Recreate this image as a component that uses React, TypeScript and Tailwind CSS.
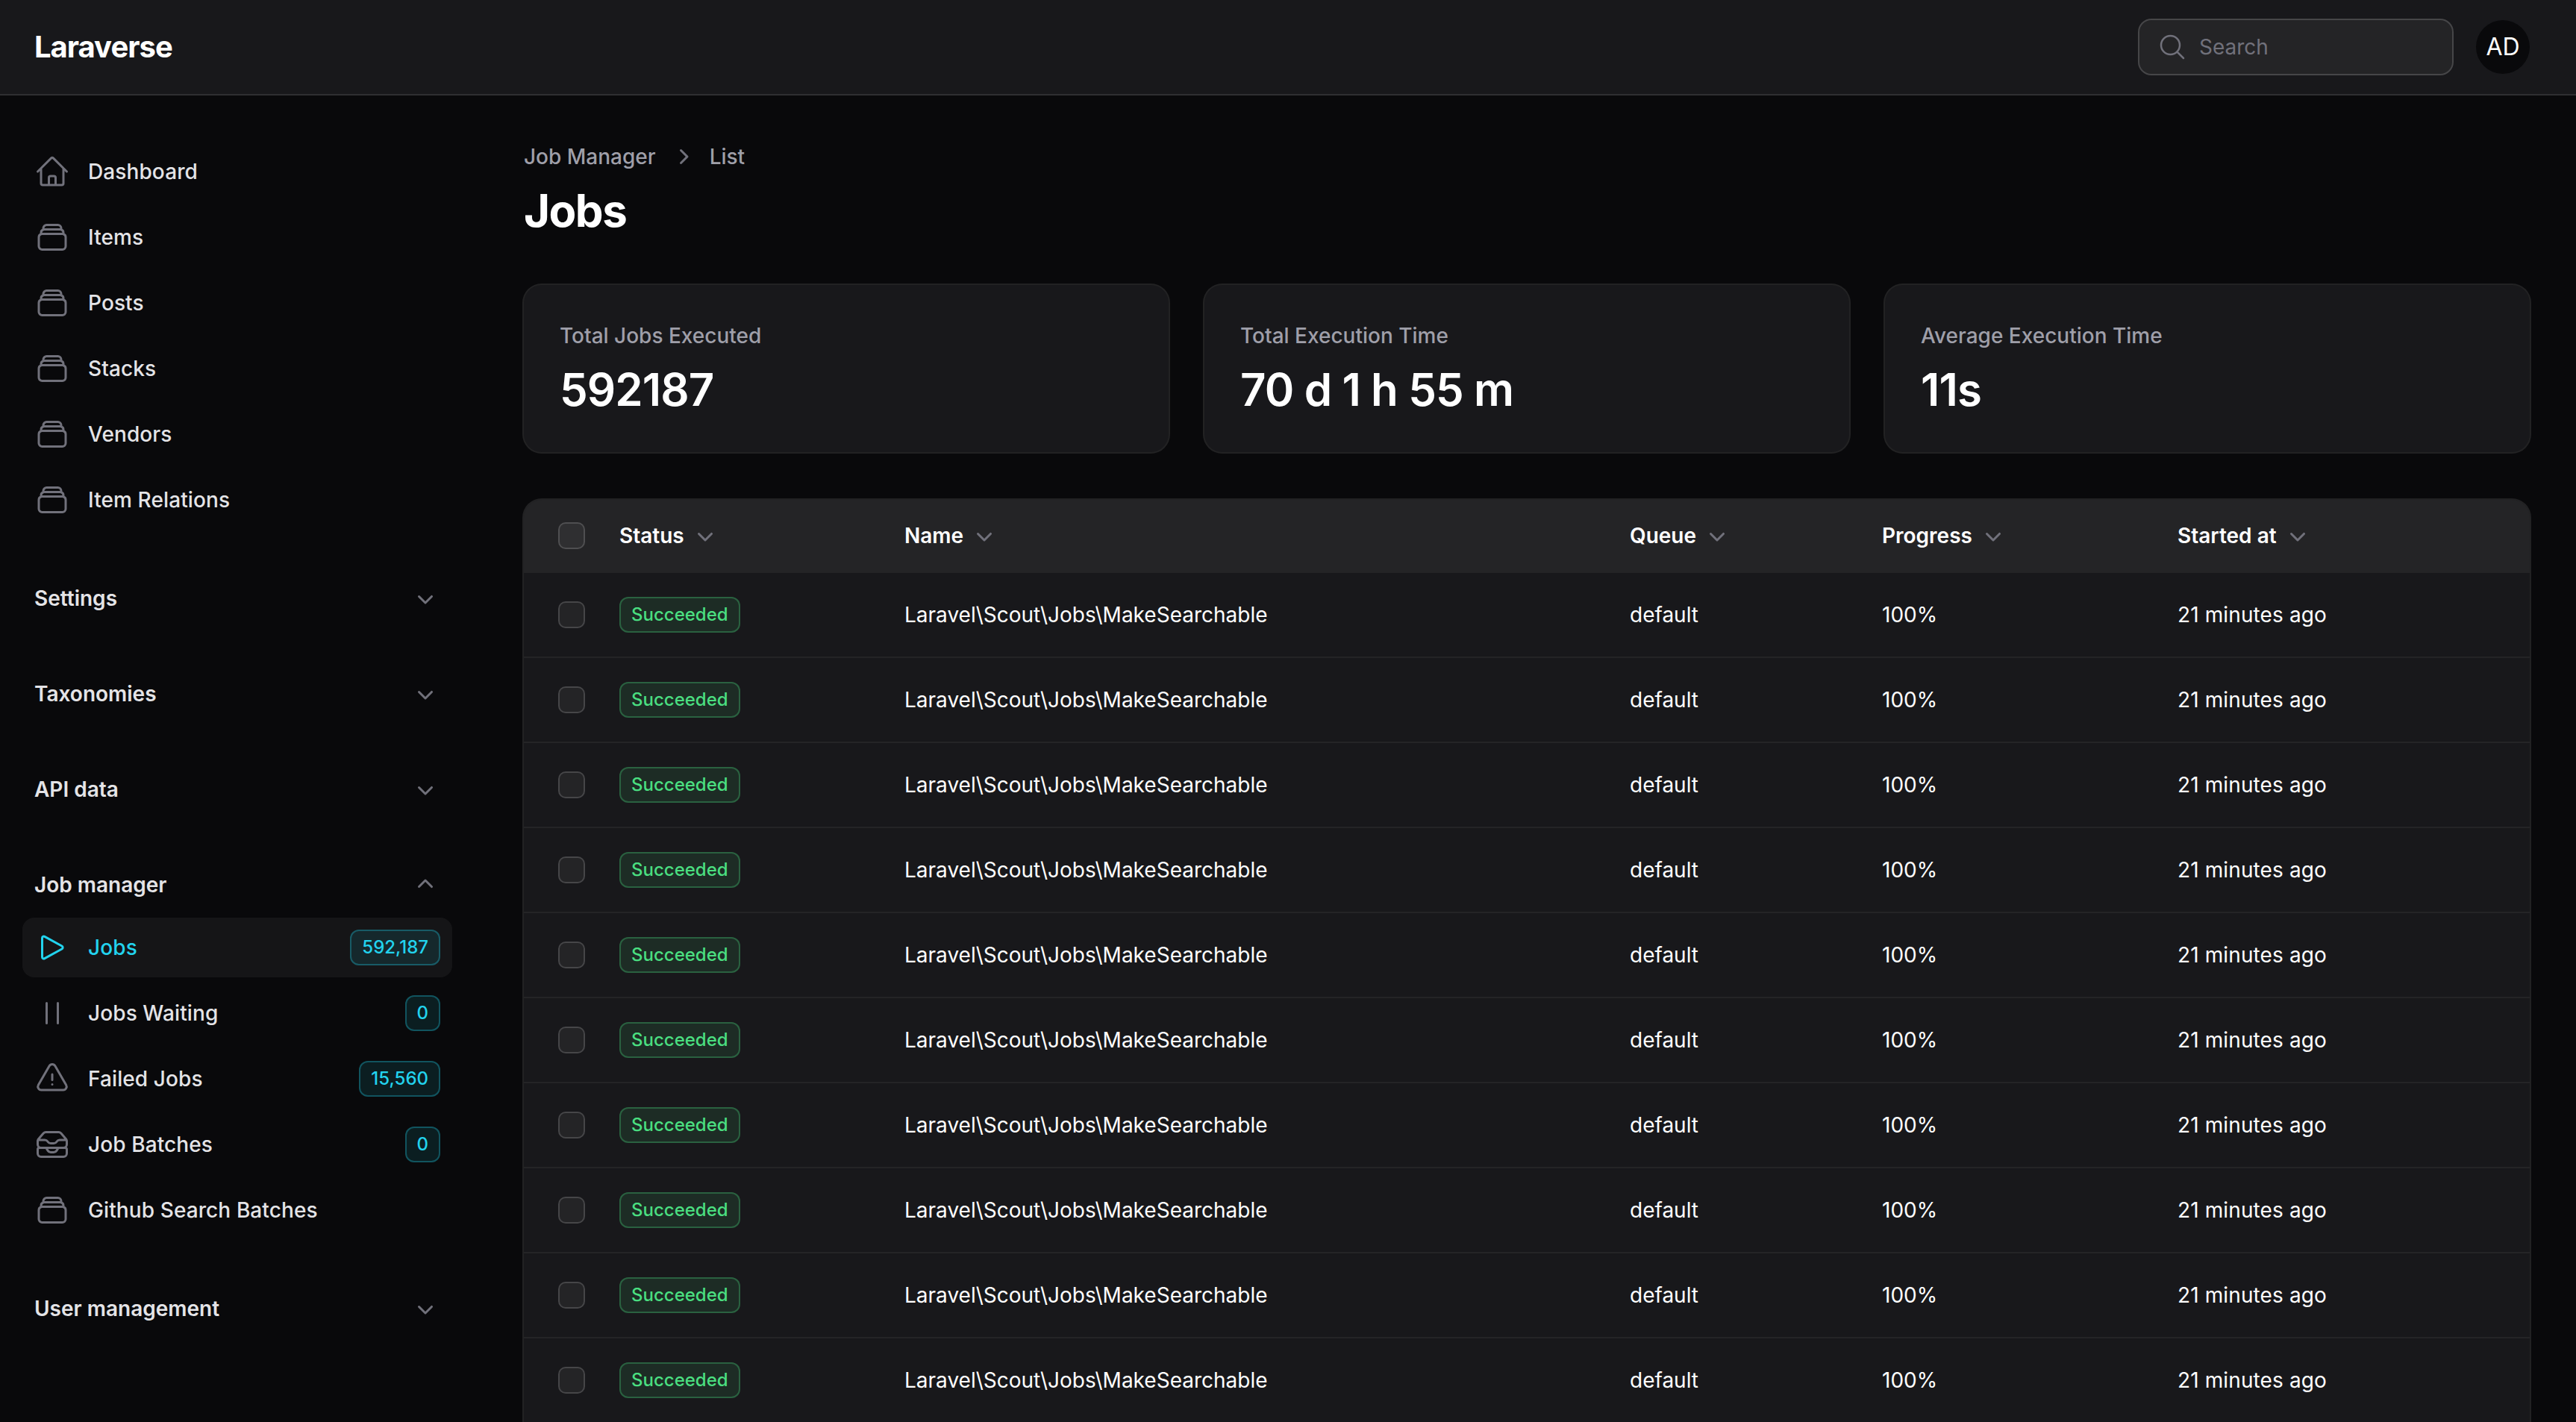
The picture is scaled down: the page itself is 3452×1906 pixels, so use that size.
import type { ReactNode } from "react";
import {
  HiOutlineHome,
  HiOutlineRectangleStack,
  HiOutlinePlay,
  HiOutlinePause,
  HiOutlineExclamationTriangle,
  HiOutlineInboxStack,
  HiOutlineMagnifyingGlass,
  HiMiniChevronDown,
  HiMiniChevronUp,
  HiMiniChevronRight,
} from "react-icons/hi2";

interface NavItemProps {
  icon: ReactNode;
  label: string;
  badge?: string;
  active?: boolean;
}

function NavItem({ icon, label, badge, active }: NavItemProps) {
  return (
    <li
      className={
        active
          ? "flex h-10 items-center gap-x-3 rounded-lg bg-white/5 px-2"
          : "flex h-10 items-center gap-x-3 rounded-lg px-2"
      }
    >
      {icon}
      <span
        className={
          active
            ? "flex-1 truncate text-sm font-medium tracking-[0.05px] text-[#22d3ee]"
            : "flex-1 truncate text-sm font-medium tracking-[0.05px] text-zinc-200"
        }
      >
        {label}
      </span>
      {badge && (
        <span className="rounded-md bg-[#22d3ee]/10 px-2 py-1 text-xs font-medium text-[#22d3ee] ring-1 ring-inset ring-[#22d3ee]/30">
          {badge}
        </span>
      )}
    </li>
  );
}

function GroupLabel({ label, open }: { label: string; open?: boolean }) {
  return (
    <div className="flex h-9 items-center gap-x-3 px-2">
      <span className="flex-1 text-sm font-semibold text-zinc-200">{label}</span>
      {open ? (
        <HiMiniChevronUp className="h-5 w-5 text-zinc-500" />
      ) : (
        <HiMiniChevronDown className="h-5 w-5 text-zinc-500" />
      )}
    </div>
  );
}

function StatCard({ label, value }: { label: string; value: string }) {
  return (
    <div className="grid gap-y-2 rounded-xl bg-zinc-900 p-6 ring-1 ring-white/10">
      <span className="text-sm font-medium text-zinc-400">{label}</span>
      <span className="text-3xl font-semibold tracking-[-0.45px] text-white">{value}</span>
    </div>
  );
}

function Checkbox() {
  return <div className="h-4 w-4 rounded bg-white/5 ring-1 ring-white/20" />;
}

function HeaderCell({ label }: { label: string }) {
  return (
    <th className="px-3 py-3.5 text-left">
      <span className="flex items-center gap-x-1 text-sm font-semibold text-white">
        {label}
        <HiMiniChevronDown className="h-5 w-5 text-zinc-500" />
      </span>
    </th>
  );
}

const stackIcon = <HiOutlineRectangleStack className="h-6 w-6 shrink-0 text-zinc-500" />;
const topItems = ["Items", "Posts", "Stacks", "Vendors", "Item Relations"];
const rows = Array.from({ length: 10 }, (_, i) => i);

export default function App() {
  return (
    <div className="flex h-[953px] w-[1726px] flex-col overflow-hidden bg-zinc-950 font-['Inter',sans-serif] [zoom:2]">
      <header className="flex h-16 shrink-0 items-center justify-between border-b border-white/10 bg-zinc-900 pl-[23px] pr-[31px]">
        <span className="text-xl font-bold leading-5 tracking-tight text-white">Laraverse</span>
        <div className="flex items-center gap-x-4">
          <div className="flex h-9 w-[209.5px] items-center gap-x-2 rounded-lg bg-white/5 pl-3 ring-1 ring-white/20">
            <HiOutlineMagnifyingGlass className="h-5 w-5 text-zinc-500" />
            <span className="text-sm text-zinc-500">Search</span>
          </div>
          <div className="flex h-9 w-9 items-center justify-center rounded-full bg-zinc-950 text-base text-white">
            AD
          </div>
        </div>
      </header>

      <div className="flex min-h-0 flex-1">
        <aside className="w-[319px] shrink-0 pl-[15px] pr-4 pt-[31px]">
          <nav className="flex flex-col gap-y-7">
            <ul className="flex flex-col gap-y-1">
              <NavItem icon={<HiOutlineHome className="h-6 w-6 shrink-0 text-zinc-500" />} label="Dashboard" />
              {topItems.map((label) => (
                <NavItem key={label} icon={stackIcon} label={label} />
              ))}
            </ul>
            <GroupLabel label="Settings" />
            <GroupLabel label="Taxonomies" />
            <GroupLabel label="API data" />
            <div className="flex flex-col gap-y-1">
              <GroupLabel label="Job manager" open />
              <ul className="flex flex-col gap-y-1">
                <NavItem
                  active
                  icon={<HiOutlinePlay className="h-6 w-6 shrink-0 text-[#22d3ee]" />}
                  label="Jobs"
                  badge="592,187"
                />
                <NavItem
                  icon={<HiOutlinePause className="h-6 w-6 shrink-0 text-zinc-500" />}
                  label="Jobs Waiting"
                  badge="0"
                />
                <NavItem
                  icon={<HiOutlineExclamationTriangle className="h-6 w-6 shrink-0 text-zinc-500" />}
                  label="Failed Jobs"
                  badge="15,560"
                />
                <NavItem
                  icon={<HiOutlineInboxStack className="h-6 w-6 shrink-0 text-zinc-500" />}
                  label="Job Batches"
                  badge="0"
                />
                <NavItem icon={stackIcon} label="Github Search Batches" />
              </ul>
            </div>
            <GroupLabel label="User management" />
          </nav>
        </aside>

        <main className="min-w-0 flex-1 pl-8 pr-[31px] pt-[31px]">
          <div className="flex items-center gap-x-2 text-sm font-medium text-zinc-400">
            <span>Job Manager</span>
            <HiMiniChevronRight className="h-5 w-5 text-zinc-500" />
            <span>List</span>
          </div>
          <h1 className="mt-2 text-3xl font-bold tracking-tight text-white">Jobs</h1>

          <div className="mt-8 grid grid-cols-3 gap-6">
            <StatCard label="Total Jobs Executed" value="592187" />
            <StatCard label="Total Execution Time" value="70 d 1 h 55 m" />
            <StatCard label="Average Execution Time" value="11s" />
          </div>

          <div className="mt-8 overflow-hidden rounded-t-xl bg-zinc-900 ring-1 ring-white/10">
            <table className="w-full table-fixed border-separate border-spacing-0">
              <colgroup>
                <col className="w-[52px]" />
                <col className="w-[191px]" />
                <col className="w-[486px]" />
                <col className="w-[169px]" />
                <col className="w-[198px]" />
                <col />
              </colgroup>
              <thead className="bg-white/5">
                <tr>
                  <th className="pl-6">
                    <Checkbox />
                  </th>
                  <HeaderCell label="Status" />
                  <HeaderCell label="Name" />
                  <HeaderCell label="Queue" />
                  <HeaderCell label="Progress" />
                  <HeaderCell label="Started at" />
                </tr>
              </thead>
              <tbody className="text-sm text-white">
                {rows.map((row) => (
                  <tr key={row}>
                    <td className="border-t border-white/5 pl-6">
                      <Checkbox />
                    </td>
                    <td className="border-t border-white/5 px-3 py-4">
                      <span className="inline-flex rounded-md bg-[#4ade80]/10 px-2 py-1 text-xs font-medium text-[#4ade80] ring-1 ring-inset ring-[#4ade80]/30">
                        Succeeded
                      </span>
                    </td>
                    <td className="border-t border-white/5 px-3 py-4">Laravel\Scout\Jobs\MakeSearchable</td>
                    <td className="border-t border-white/5 px-3 py-4">default</td>
                    <td className="border-t border-white/5 px-3 py-4">100%</td>
                    <td className="border-t border-white/5 px-3 py-4 tracking-[0.06px]">21 minutes ago</td>
                  </tr>
                ))}
              </tbody>
            </table>
          </div>
        </main>
      </div>
    </div>
  );
}
